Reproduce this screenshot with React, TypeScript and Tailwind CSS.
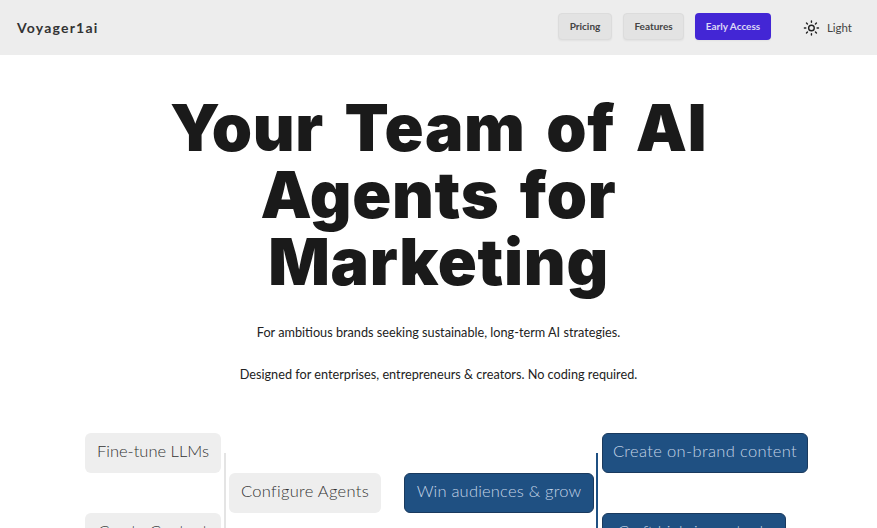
import { Sun } from "lucide-react";

function Box({ label, dark, className }: { label: string; dark?: boolean; className?: string }) {
  return (
    <div
      className={`flex h-10 items-center justify-center rounded-md pb-[3px] text-[16.5px] font-light whitespace-nowrap ${
        dark ? "border border-[#1a3a5e] bg-[#1f5082] text-[#c3d3e6]" : "bg-[#eeeeee] text-[#333333]"
      } ${className ?? ""}`}
    >
      {label}
    </div>
  );
}

export default function App() {
  return (
    <div className="h-[528px] w-[877px] overflow-hidden bg-white font-['Lato',sans-serif]">
      <header className="flex h-[55px] items-center justify-between bg-[#ededed] pl-[17px] pr-[25px]">
        <div className="text-sm font-bold tracking-[1.2px] text-[#333333]">Voyager1ai</div>
        <nav className="mb-[2px] flex items-center">
          <button className="h-[27px] w-[54px] rounded-sm border border-[#dcdcdc] bg-[#e3e3e3] text-[10px] font-bold text-[#444444] shadow-xs">
            Pricing
          </button>
          <button className="ml-[11px] h-[27px] w-[61px] rounded-sm border border-[#dcdcdc] bg-[#e3e3e3] text-[10px] font-bold text-[#444444] shadow-xs">
            Features
          </button>
          <button className="ml-[11px] h-[27px] w-[76px] rounded-sm bg-[#4326d5] text-[10px] font-bold text-[#dcd8f5] shadow-xs">
            Early Access
          </button>
          <div className="mt-[2px] ml-[32px] flex w-[49px] items-center gap-[7px] text-[11.5px] text-[#444444]">
            <Sun size={18} className="text-[#222222]" />
            Light
          </div>
        </nav>
      </header>

      <main className="flex flex-col items-center">
        <h1 className="mt-[40px] w-[600px] text-center font-['Inter',sans-serif] text-[64.5px] leading-[67px] font-black tracking-[0.7px] [word-spacing:7px] text-[#1a1a1a]">
          Your Team of AI Agents for Marketing
        </h1>
        <p className="mt-[26px] text-[12.7px] leading-5 text-[#222222]">
          For ambitious brands seeking sustainable, long-term AI strategies.
        </p>
        <p className="mt-[22px] text-[12.7px] leading-5 text-[#222222]">
          Designed for enterprises, entrepreneurs &amp; creators. No coding required.
        </p>

        <div className="mt-[49px] flex w-full pl-[85px]">
          <div className="flex w-[136px] flex-col gap-10">
            <Box label="Fine-tune LLMs" />
            <Box label="Create Content" />
          </div>
          <div className="mt-5 ml-[3px] h-[100px] w-[2px] bg-[#e4e4e4]" />
          <Box label="Configure Agents" className="mt-10 ml-[3px] w-[152px] tracking-[0.3px]" />
          <Box label="Win audiences & grow" dark className="mt-10 ml-[23px] w-[190px] tracking-[0.2px]" />
          <div className="mt-5 ml-[2px] h-[100px] w-[2px] bg-[#1f5082]" />
          <div className="ml-[4px] flex flex-col items-start gap-10">
            <Box label="Create on-brand content" dark className="w-[206px] tracking-[0.35px]" />
            <Box label="Craft high-impact ads" dark className="w-[184px]" />
          </div>
        </div>
      </main>
    </div>
  );
}
